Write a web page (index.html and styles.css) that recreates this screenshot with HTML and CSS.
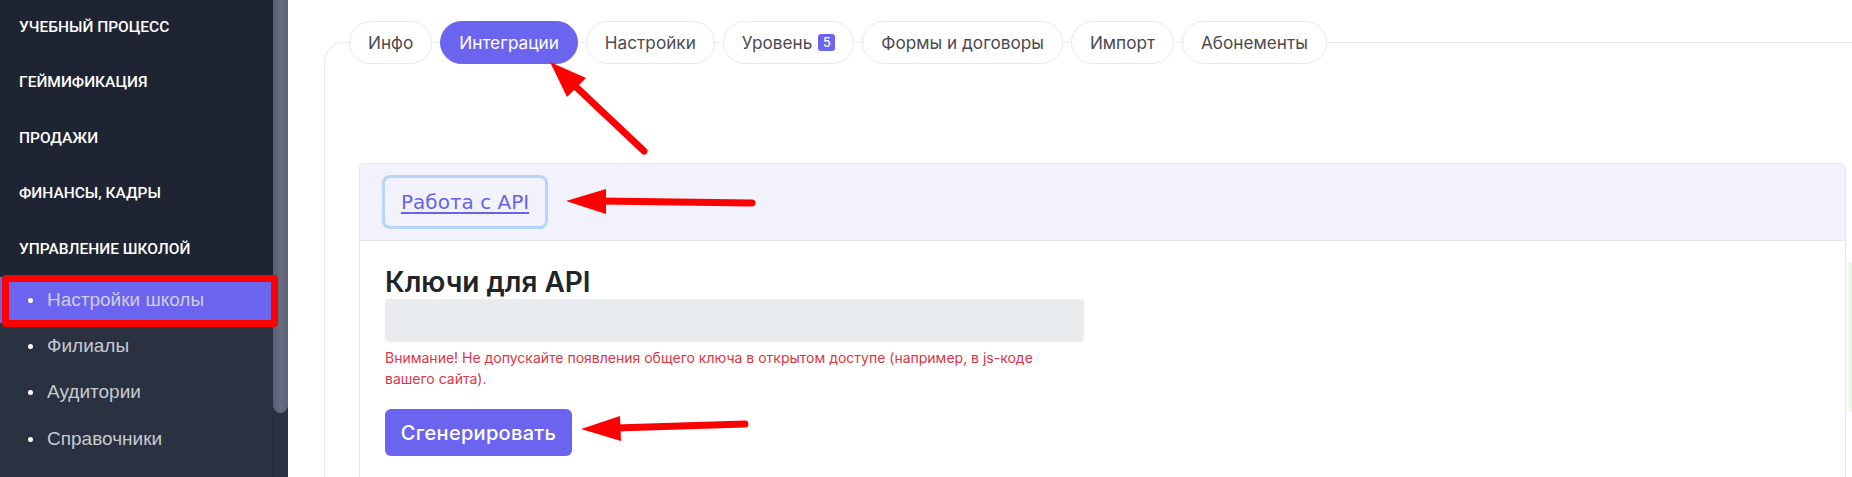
FILE: index.html
```html
<!DOCTYPE html>
<html lang="ru">
<head>
<meta charset="utf-8">
<title>Настройки школы</title>
<link rel="stylesheet" href="styles.css">
</head>
<body>
<div class="app">
  <aside class="sidebar">
    <nav class="menu">
      <div class="menu-head">УЧЕБНЫЙ ПРОЦЕСС</div>
      <div class="menu-head">ГЕЙМИФИКАЦИЯ</div>
      <div class="menu-head">ПРОДАЖИ</div>
      <div class="menu-head">ФИНАНСЫ, КАДРЫ</div>
      <div class="menu-head">УПРАВЛЕНИЕ ШКОЛОЙ</div>
      <ul class="submenu">
        <li class="sub-item active">Настройки школы</li>
        <li class="sub-item">Филиалы</li>
        <li class="sub-item">Аудитории</li>
        <li class="sub-item">Справочники</li>
        <li class="sub-item">Сотрудники</li>
      </ul>
    </nav>
    <div class="scrollbar"><div class="thumb"></div></div>
  </aside>
  <main class="main">
    <section class="card">
      <div class="tabs">
        <span class="tab">Инфо</span>
        <span class="tab active">Интеграции</span>
        <span class="tab">Настройки</span>
        <span class="tab">Уровень <span class="badge">5</span></span>
        <span class="tab">Формы и договоры</span>
        <span class="tab">Импорт</span>
        <span class="tab">Абонементы</span>
      </div>
      <div class="panel">
        <div class="panel-head">
          <a class="api-link" href="#">Работа с API</a>
        </div>
        <div class="panel-body">
          <div class="form">
            <h2 class="title">Ключи для API</h2>
            <div class="key-input"></div>
            <p class="warn">Внимание! Не допускайте появления общего ключа в открытом доступе (например, в js-коде вашего сайта).</p>
            <button class="btn" type="button">Сгенерировать</button>
          </div>
        </div>
      </div>
    </section>
  </main>
</div>
<div class="edge-glow"></div>
<div class="annot-box"></div>
<svg class="arrows" width="1852" height="477" viewBox="0 0 1852 477">
  <g stroke="#ff0000" stroke-width="7" stroke-linecap="round" fill="none">
    <line x1="644" y1="151" x2="574" y2="85"/>
    <line x1="752" y1="203" x2="600" y2="201"/>
    <line x1="745" y1="424" x2="615" y2="428"/>
  </g>
  <g fill="#ff0000">
    <polygon points="550,62 586,78 567,97"/>
    <polygon points="566,201 606,189 606,214"/>
    <polygon points="581,429 620,416 621,441"/>
  </g>
</svg>
</body>
</html>
```

FILE: styles.css
```css
* { box-sizing: border-box; }

html, body {
  margin: 0;
  padding: 0;
  height: 477px;
  overflow: hidden;
  background: #ffffff;
}

body {
  font-family: Inter, "Noto Sans", sans-serif;
  position: relative;
}

.app {
  display: flex;
  height: 477px;
}

/* Sidebar */
.sidebar {
  display: flex;
  width: 288px;
  flex: 0 0 288px;
  background: #1f2433;
}

.menu {
  width: 273px;
  display: flex;
  flex-direction: column;
  margin-top: -1px;
}

.menu-head {
  flex: 0 0 55.5px;
  height: 55.5px;
  display: flex;
  align-items: center;
  padding-left: 19px;
  color: #ffffff;
  font-family: Roboto, "Liberation Sans", sans-serif;
  font-weight: 500;
  font-size: 15.5px;
}

.submenu {
  list-style: none;
  margin: 0;
  padding: 0;
  flex: 1 0 auto;
  background: #2a3140;
}

.sub-item {
  height: 46.4px;
  display: flex;
  align-items: center;
  padding-left: 47px;
  position: relative;
  color: #c7cad3;
  font-family: "Liberation Sans", Arial, sans-serif;
  font-size: 19px;
}

.sub-item::before {
  content: "";
  position: absolute;
  left: 28px;
  top: 50%;
  width: 5px;
  height: 5px;
  margin-top: -2px;
  border-radius: 50%;
  background: #ffffff;
}

.sub-item.active {
  background: #6b64ef;
  color: #cfcde0;
}

.scrollbar {
  width: 15px;
  background: #2a3140;
  border-left: 1px solid #262c3a;
}

.thumb {
  height: 413px;
  margin-left: -1px;
  background: linear-gradient(90deg, #575d72 0%, #666c82 50%, #5c6277 100%);
  border-radius: 0 0 8px 8px;
}

/* Main */
.main {
  flex: 1;
  padding: 42px 0 0 36px;
  min-width: 0;
}

.card {
  border-top: 1px solid #e8eaf3;
  border-left: 1px solid #e8eaf3;
  border-top-left-radius: 20px;
  height: 100%;
}

.tabs {
  display: flex;
  gap: 8px;
  margin: -22px 0 0 24px;
}

.tab {
  display: inline-flex;
  align-items: center;
  gap: 6px;
  height: 43px;
  padding: 0 18px;
  border: 1px solid #e6e9f4;
  border-radius: 22px;
  background: #ffffff;
  color: #4b4b4f;
  font-size: 17.2px;
  white-space: nowrap;
}

.tab.active {
  background: #6b64ef;
  border-color: #6b64ef;
  color: #ffffff;
}

.badge {
  display: inline-flex;
  align-items: center;
  justify-content: center;
  width: 17px;
  height: 17px;
  border-radius: 3px;
  background: #6b64ef;
  color: #ffffff;
  font-size: 12.5px;
  font-weight: 500;
}

.panel {
  margin: 99px 6px 0 34px;
  border: 1px solid #e3e5f3;
  border-bottom: none;
  border-radius: 5px 5px 0 0;
  height: 320px;
}

.panel-head {
  background: #f1f2fb;
  border-bottom: 1px solid #e3e5f3;
  padding: 11px 22px 11px;
  border-radius: 5px 5px 0 0;
}

.api-link {
  display: inline-flex;
  align-items: center;
  height: 54px;
  padding: 0 16px;
  border: 3px solid #b7d5fb;
  border-radius: 8px;
  color: #6a62e6;
  font-family: "DejaVu Sans", Verdana, sans-serif;
  font-size: 20px;
  text-decoration: underline;
  text-underline-offset: 3px;
}

.panel-body {
  padding: 24px 25px;
}

.form {
  width: 699px;
}

.title {
  margin: 0;
  font-size: 28px;
  line-height: 34px;
  font-weight: 600;
  color: #212529;
}

.key-input {
  height: 43px;
  background: #e9ecef;
  border-radius: 4px;
}

.warn {
  margin: 5px 0 0;
  font-size: 14px;
  line-height: 21px;
  color: #dc3545;
}

.btn {
  margin-top: 20px;
  width: 187px;
  height: 47px;
  border: none;
  border-radius: 6px;
  background: #6b64ef;
  color: #ffffff;
  font-family: Inter, sans-serif;
  font-size: 20px;
  font-weight: 500;
  letter-spacing: 0.3px;
}

/* Overlays */
.edge-glow {
  position: absolute;
  left: 1848px;
  top: 262px;
  width: 4px;
  height: 150px;
  border-radius: 3px;
  background: linear-gradient(90deg, #f4fbf1, #dff5d6);
}

.annot-box {
  position: absolute;
  left: 2px;
  top: 275px;
  width: 276px;
  height: 52px;
  border: 7px solid #ff0000;
  border-radius: 4px;
}

.arrows {
  position: absolute;
  left: 0;
  top: 0;
  pointer-events: none;
}
```
